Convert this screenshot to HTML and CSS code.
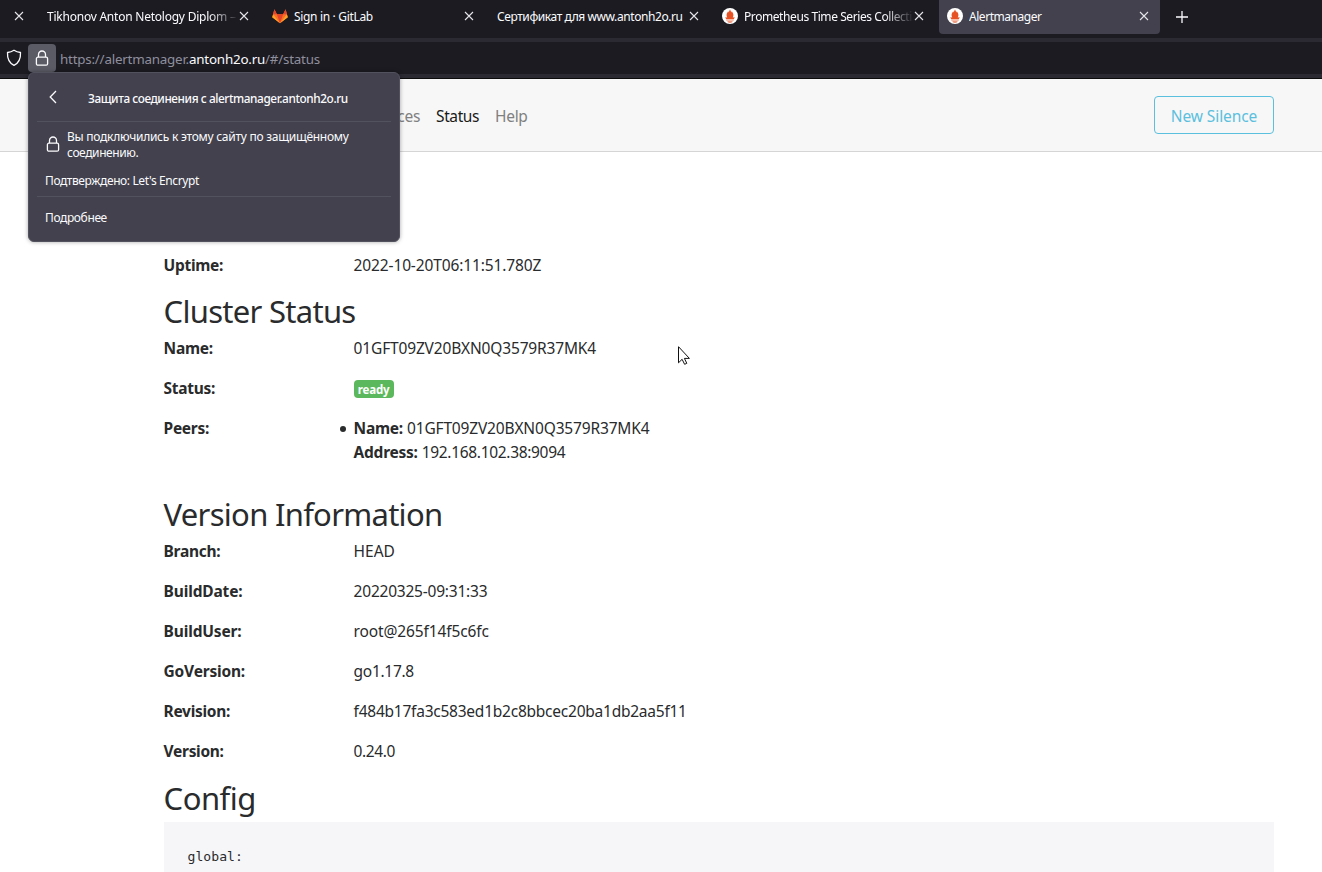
FILE: index.html
```html
<!DOCTYPE html>
<html lang="ru">
<head>
<meta charset="utf-8">
<title>Alertmanager</title>
<link rel="stylesheet" href="styles.css">
</head>
<body>
<svg class="defs" width="0" height="0">
  <symbol id="close" viewBox="0 0 10 10"><path d="M1 1l8 8M9 1l-8 8" fill="none" stroke="#e6e6ea" stroke-width="1.1"/></symbol>
  <symbol id="prometheus" viewBox="0 0 16 16"><circle cx="8" cy="8" r="8" fill="#fff"/><path d="M8 1.200c.2 1.300 1.100 1.800 1.100 3.200.4-.4.6-.8.6-1.200.8 1.100 1.700 2 1.700 3.800 0 1.300-.3 2-.7 2.600l2-.4c-.2.700-.5 1.200-.9 1.700H4.200c-.4-.5-.7-1-.9-1.700l2 .4c-.4-.6-.7-1.300-.7-2.600 0-1.800.9-2.700 1.700-3.800 0 .4.200.8.6 1.200 0-1.400.9-1.900 1.100-3.200z" fill="#e75225"/><path d="M4.200 11.500h7.600v1.100H4.200zM5.200 13.200h5.600c-.6 1-1.600 1.500-2.800 1.500s-2.200-.5-2.800-1.500z" fill="#ee7a55"/></symbol>
  <symbol id="lock" viewBox="0 0 14 16"><path d="M3.500 7V4.500a3.500 3.500 0 0 1 7 0V7" fill="none" stroke="#fbfbfe" stroke-width="1.300"/><rect x="1.400" y="7.200" width="11.200" height="8" rx="1.500" fill="none" stroke="#fbfbfe" stroke-width="1.300"/></symbol>
</svg>
<header class="browser">
  <div class="tabs">
    <div class="tab tab-edge"><svg class="close"><use href="#close"/></svg></div>
    <div class="tab"><span class="title t-diplom fade">Tikhonov Anton Netology Diplom –</span><svg class="close"><use href="#close"/></svg></div>
    <div class="tab"><svg class="favicon" viewBox="0 0 16 16"><path d="M8 15.200L.2 9.300 2.400 1.300 4.900 6.300h6.200l2.500-5 2.200 8z" fill="#fc6d26"/><path d="M8 15.200L4.900 6.300h6.200z" fill="#e24329"/><path d="M8 15.200L.2 9.300l1-3z M8 15.200l7.800-5.900-1-3z" fill="#fca326"/><path d="M2.400 1.300l2.500 5H1.100zM13.600 1.300l-2.500 5h3.800z" fill="#e24329"/></svg><span class="title t-gitlab">Sign in · GitLab</span><svg class="close"><use href="#close"/></svg></div>
    <div class="tab"><span class="title t-cert">Сертификат для www.antonh2o.ru</span><svg class="close"><use href="#close"/></svg></div>
    <div class="tab"><svg class="favicon"><use href="#prometheus"/></svg><span class="title t-prom fade">Prometheus Time Series Collecti</span><svg class="close"><use href="#close"/></svg></div>
    <div class="tab active"><svg class="favicon"><use href="#prometheus"/></svg><span class="title t-alert">Alertmanager</span><svg class="close"><use href="#close"/></svg></div>
    <svg class="plus" viewBox="0 0 12 12"><path d="M6 0v12M0 6h12" stroke="#fbfbfe" stroke-width="1.300"/></svg>
  </div>
  <div class="urlbar">
    <svg class="shield" viewBox="0 0 16 18"><path d="M8 1.200c2 1.300 4.200 2 6.500 2.300.3 6-1.500 10.400-6.500 12.900C3 13.900 1.200 9.500 1.500 3.500 3.800 3.200 6 2.500 8 1.200z" fill="none" stroke="#fbfbfe" stroke-width="1.300" stroke-linejoin="round"/></svg>
    <div class="identity"><svg class="lock"><use href="#lock"/></svg></div>
    <div class="url">https://alertmanager.<b>antonh2o.ru</b>/#/status</div>
  </div>
</header>
<nav class="navbar">
  <div class="links"><a class="n-silences">Silences</a><a class="n-status">Status</a><a class="n-help">Help</a></div>
  <button class="new-silence">New Silence</button>
</nav>
<main class="container">
  <dl class="row"><dt>Uptime:</dt><dd class="v-uptime">2022-10-20T06:11:51.780Z</dd></dl>
  <h2>Cluster Status</h2>
  <dl class="row"><dt>Name:</dt><dd class="v-name">01GFT09ZV20BXN0Q3579R37MK4</dd></dl>
  <dl class="row"><dt>Status:</dt><dd><span class="badge">ready</span></dd></dl>
  <dl class="row peers"><dt>Peers:</dt><dd><ul><li><div><b>Name:</b> <span class="v-name">01GFT09ZV20BXN0Q3579R37MK4</span></div><div><b>Address:</b> <span class="v-address">192.168.102.38:9094</span></div></li></ul></dd></dl>
  <h2>Version Information</h2>
  <dl class="row"><dt>Branch:</dt><dd>HEAD</dd></dl>
  <dl class="row"><dt class="l-build">BuildDate:</dt><dd class="v-date">20220325-09:31:33</dd></dl>
  <dl class="row"><dt class="l-build">BuildUser:</dt><dd class="v-user">root@265f14f5c6fc</dd></dl>
  <dl class="row"><dt class="l-go">GoVersion:</dt><dd class="v-go">go1.17.8</dd></dl>
  <dl class="row"><dt>Revision:</dt><dd class="v-revision">f484b17fa3c583ed1b2c8bbcec20ba1db2aa5f11</dd></dl>
  <dl class="row"><dt>Version:</dt><dd class="v-version">0.24.0</dd></dl>
  <h2 class="h-config">Config</h2>
  <pre class="config">global:</pre>
</main>
<aside class="popup">
  <div class="popup-head"><svg class="back" viewBox="0 0 8 14"><path d="M7 1L1.200 7 7 13" fill="none" stroke="#fbfbfe" stroke-width="1.300"/></svg><span class="p-title">Защита соединения с alertmanager.antonh2o.ru</span></div>
  <div class="popup-body">
    <div class="secure"><svg class="lock"><use href="#lock"/></svg><p><span class="p-one">Вы подключились к этому сайту по защищённому</span><br><span class="p-two">соединению.</span></p></div>
    <div class="verified">Подтверждено: Let's Encrypt</div>
  </div>
  <div class="more">Подробнее</div>
</aside>
<svg class="cursor" viewBox="0 0 12 19"><path d="M.5.7v16.100l3.600-3.500 2.500 5 2.200-1-2.400-4.900h5z" fill="#fff" stroke="#111" stroke-width="1"/></svg>
</body>
</html>
```
FILE: styles.css
```css
* { box-sizing: border-box; }
html, body { margin: 0; height: 872px; overflow: hidden; }
body { position: relative; background: #fff; color: #292b2c; font: 15.5px/24px "Noto Sans", "Open Sans", sans-serif; }
.defs { position: absolute; }
svg { display: block; flex: none; }

.browser { height: 79px; background: #1c1b22; border-bottom: 1px solid #0c0c0d; color: #fbfbfe; }
.tabs { display: flex; gap: 4px; height: 38px; width: 1400px; margin-left: -186px; }
.tab { display: flex; align-items: center; width: 221px; height: 34px; padding: 0 11px 2px 8px; border-radius: 0 0 4px 4px; font-size: 12px; }
.tab.active { background: #42414d; }
.title { flex: 1; overflow: hidden; padding-top: 2px; white-space: nowrap; line-height: 20px; }
.t-diplom { letter-spacing: -.23px; }
.t-gitlab { letter-spacing: -.33px; }
.t-cert { letter-spacing: -.42px; }
.t-prom { letter-spacing: -.42px; }
.t-alert { letter-spacing: -.46px; }
.fade { mask-image: linear-gradient(to left, transparent, #000 30px); }
.favicon { width: 16px; height: 16px; margin-right: 6px; }
.close { width: 10px; height: 10px; margin-left: auto; }
.plus { width: 12px; height: 12px; margin: 11px 0 0 12px; }
.urlbar { display: flex; align-items: center; height: 40px; border: solid #2b2a33; border-width: 4px 0; padding-left: 6px; }
.shield { width: 16px; height: 18px; }
.identity { display: flex; align-items: center; justify-content: center; width: 28px; height: 28px; margin-left: 6px; border-radius: 4px; background: #5b5b66; }
.lock { width: 14px; height: 16px; }
.url { margin-left: 4px; padding-top: 2px; font-size: 13.4px; letter-spacing: -.22px; color: #8f8f9d; white-space: nowrap; }
.url b { font-weight: 400; color: #fbfbfe; }

.navbar { display: flex; align-items: center; justify-content: space-between; height: 73px; padding: 0 48px 0 364px; background: #f7f7f7; border-bottom: 1px solid #d5d5d5; }
.links { display: flex; gap: 16px; padding-top: 2px; color: #808080; }
.n-silences { letter-spacing: -.3px; }
.n-status { letter-spacing: -.4px; color: #1a1a1a; }
.n-help { letter-spacing: -.3px; }
.new-silence { width: 120px; height: 38px; padding: 2px 0 0; border: 1px solid #5bc0de; border-radius: 4px; background: transparent; color: #5bc0de; font: inherit; letter-spacing: -.1px; }

.container { width: 1110.4px; margin: 101px 0 0 163.6px; }
.row { display: flex; margin: 0 0 16px; }
.row dt { width: 190px; font-weight: 700; letter-spacing: -.3px; }
.row .l-build { letter-spacing: -.15px; }
.row .l-go { letter-spacing: -.2px; }
.row dd { margin: 0; }
.row b { letter-spacing: -.25px; }
.v-uptime { letter-spacing: -.13px; }
.v-name { letter-spacing: -.16px; }
.v-address { letter-spacing: -.32px; }
.v-date { letter-spacing: -.22px; }
.v-user { letter-spacing: -.13px; }
.v-go { letter-spacing: -.3px; }
.v-revision { letter-spacing: -.24px; }
.v-version { letter-spacing: -.4px; }
.row.peers { margin-bottom: 32px; }
.row ul { margin: 0 0 0 -14px; padding: 0; list-style: none; }
.row li { display: grid; grid-template-columns: 14px auto; }
.row li::before { content: ""; grid-row: span 2; width: 6px; height: 6px; margin-top: 10px; border-radius: 50%; background: #292b2c; }
.badge { display: block; width: 40px; height: 18px; margin-top: 4px; border-radius: 4px; background: #5cb85c; color: #fff; font-size: 11.5px; font-weight: 700; line-height: 19px; letter-spacing: -.2px; text-align: center; }
h2 { margin: 0 0 7px; padding-top: 1px; font-size: 31px; font-weight: 400; line-height: 35.2px; letter-spacing: -.72px; }
.h-config { margin-bottom: 6px; padding-top: 1.4px; letter-spacing: -.5px; }
.config { height: 60px; margin: 0; padding: 23px 24px; background: #f6f6f9; font: 13.1px/24px "DejaVu Sans Mono", monospace; }

.popup { position: absolute; left: 28px; top: 72px; width: 372px; height: 170px; padding: 0 8px; border: 1px solid #52525e; border-radius: 6px; background: #42414d; box-shadow: 0 0 4px rgba(0,0,0,.35); color: #fbfbfe; font-size: 12px; line-height: 16px; }
.popup-head { display: flex; align-items: center; height: 49px; padding-left: 12px; border-bottom: 1px solid #52525e; }
.back { width: 8px; height: 14px; }
.p-title { margin-left: 31px; padding-top: 1px; font-size: 11.8px; font-weight: 500; letter-spacing: -.42px; white-space: nowrap; }
.popup-body { height: 75px; padding: 7px 8px 0; border-bottom: 1px solid #52525e; }
.secure { display: flex; align-items: center; gap: 7px; margin-left: 1px; white-space: nowrap; }
.secure .lock { margin-bottom: 2px; }
.secure p { margin: 0; }
.p-one { letter-spacing: -.26px; }
.p-two { letter-spacing: -.4px; }
.verified { margin-top: 12px; letter-spacing: -.38px; }
.more { padding: 13px 8px; letter-spacing: -.38px; }
.cursor { position: absolute; left: 678px; top: 346px; width: 12px; height: 19px; }
```
